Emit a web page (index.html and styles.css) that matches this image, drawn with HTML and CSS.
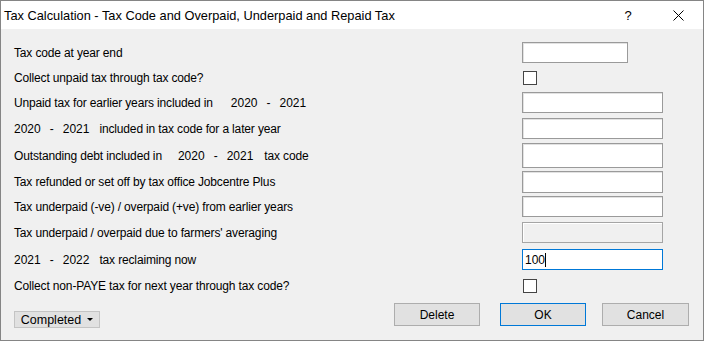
FILE: index.html
```html
<!DOCTYPE html>
<html lang="en">
<head>
  <meta charset="UTF-8" />
  <title>Tax Calculation</title>
  <link rel="stylesheet" href="styles.css">
</head>
<body>
  <div class="dialog">
    <!-- title bar -->
    <div class="titlebar">
      <span class="title">Tax Calculation - Tax Code and Overpaid, Underpaid and Repaid Tax</span>
      <span class="cap help">?</span>
      <span class="cap close">
        <svg width="11" height="11" viewBox="0 0 11 11"><path d="M0.5 0.5 L10.5 10.5 M10.5 0.5 L0.5 10.5" stroke="#000" stroke-width="1" fill="none"/></svg>
      </span>
    </div>

    <!-- form rows -->
    <div class="form">
      <div class="label">Tax code at year end</div>
      <div><div class="field short"></div></div>

      <div class="label">Collect unpaid tax through tax code?</div>
      <div><div class="check"></div></div>

      <div class="label">Unpaid tax for earlier years included in<span class="period after"><span>2020</span><span class="dash">-</span><span>2021</span></span></div>
      <div><div class="field"></div></div>

      <div class="label"><span class="period before"><span>2020</span><span class="dash">-</span><span>2021</span></span>included in tax code for a later year</div>
      <div><div class="field"></div></div>

      <div class="label">Outstanding debt included in<span class="period after mid"><span>2020</span><span class="dash">-</span><span>2021</span></span>tax code</div>
      <div><div class="field tall"></div></div>

      <div class="label">Tax refunded or set off by tax office Jobcentre Plus</div>
      <div><div class="field h22"></div></div>

      <div class="label">Tax underpaid (-ve) / overpaid (+ve) from earlier years</div>
      <div><div class="field"></div></div>

      <div class="label">Tax underpaid / overpaid due to farmers' averaging</div>
      <div><div class="field disabled"></div></div>

      <div class="label"><span class="period before"><span>2021</span><span class="dash">-</span><span>2022</span></span>tax reclaiming now</div>
      <div><div class="field focused">100<span class="caret"></span></div></div>

      <div class="label">Collect non-PAYE tax for next year through tax code?</div>
      <div><div class="check"></div></div>
    </div>

    <!-- bottom buttons -->
    <div class="footer">
      <button class="status">Completed <span class="arrow"></span></button>
      <div class="spacer"></div>
      <button class="btn">Delete</button>
      <button class="btn ok">OK</button>
      <button class="btn cancel">Cancel</button>
    </div>
  </div>
</body>
</html>
```

FILE: styles.css
```css
/* ---------- base ---------- */
* {
  box-sizing: border-box;
}

body {
  margin: 0;
  font-family: "Liberation Sans", Arial, sans-serif;
  font-size: 12px;
  color: #000;
}

.dialog {
  width: 704px;
  height: 341px;
  border: 1px solid #858585;
  background: #f0f0f0;
  display: flex;
  flex-direction: column;
}

/* ---------- title bar ---------- */
.titlebar {
  height: 28px;
  background: #fff;
  display: flex;
  align-items: center;
  padding-left: 3px;
}

.title {
  flex: 1;
  font-size: 12.8px;
}

.cap {
  width: 50px;
  height: 28px;
  display: flex;
  align-items: center;
  justify-content: center;
}

.help {
  font-size: 13px;
}

/* ---------- form ---------- */
.form {
  display: grid;
  grid-template-columns: 508px auto;
  grid-template-rows: 25px 25px 25px 27px 27px 26px 23px 29px 25px 28px;
  align-items: center;
  padding: 11px 0 0 13px;
}

.label {
  white-space: nowrap;
  letter-spacing: -0.15px;
}

.period span {
  display: inline-block;
  letter-spacing: 0;
}

.period .dash {
  width: 4px;
  margin: 0 9px;
}

.period.after {
  margin-left: 18px;
}

.period.after.mid {
  margin-left: 16px;
  margin-right: 11px;
}

.period.before {
  margin-right: 10px;
}

.field {
  width: 141px;
  height: 21px;
  background: #fff;
  border: 1px solid #9a9a9a;
  box-shadow: inset 1px 1px 0 #e2e2e2;
  padding: 3px 0 0 2px;
  line-height: 14px;
  display: flex;
  align-items: flex-start;
}

.field.short {
  width: 106px;
}

.field.tall {
  height: 25px;
}

.field.h22 {
  height: 22px;
}

.field.disabled {
  background: #f0f0f0;
  border-color: #a5a5a5;
  box-shadow: inset 1px 1px 0 #fff;
}

.field.focused {
  border-color: #0078d7;
  box-shadow: none;
}

.caret {
  display: inline-block;
  width: 1px;
  height: 14px;
  background: #000;
}

.check {
  width: 14px;
  height: 14px;
  margin-left: 1px;
  background: #fff;
  border: 1px solid #444;
}

/* ---------- footer ---------- */
.footer {
  display: flex;
  align-items: flex-start;
  padding: 3px 14px 0 13px;
}

.spacer {
  flex: 1;
}

button {
  font-family: "Liberation Sans", Arial, sans-serif;
  font-size: 12px;
  color: #000;
  background: #e1e1e1;
  border: 1px solid #adadad;
  padding: 0;
}

.status {
  margin-top: 8px;
  width: 86px;
  height: 17px;
  border-color: #c4c4c4;
  display: flex;
  align-items: center;
  justify-content: center;
  gap: 6px;
  font-size: 12.5px;
}

.arrow {
  width: 0;
  height: 0;
  border-left: 3px solid transparent;
  border-right: 3px solid transparent;
  border-top: 3px solid #000;
}

.btn {
  width: 86px;
  height: 23px;
}

.btn.ok {
  margin-left: 20px;
  border-color: #0078d7;
}

.btn.cancel {
  margin-left: 16px;
  width: 87px;
}
```
